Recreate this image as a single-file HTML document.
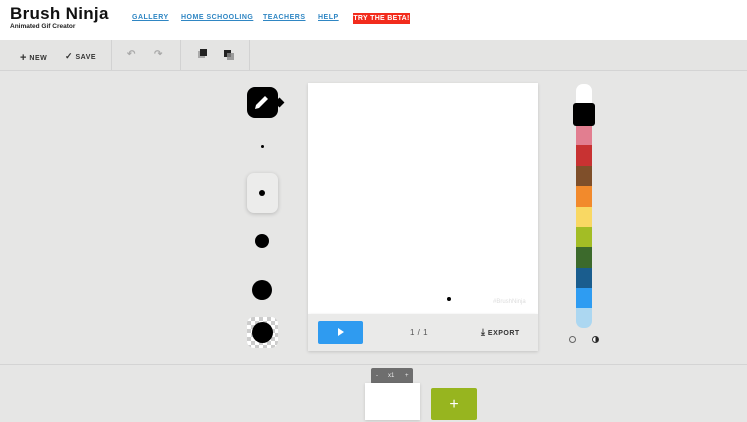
<!DOCTYPE html>
<html><head><meta charset="utf-8"><style>
*{margin:0;padding:0;box-sizing:border-box}
body{width:747px;height:420px;overflow:hidden;background:#e6e6e5;font-family:"Liberation Sans",sans-serif;position:relative}
.hdr{position:absolute;left:0;top:0;width:747px;height:40px;background:#fff}
.logo{position:absolute;left:10px;top:4px;font-size:17px;font-weight:bold;color:#111;letter-spacing:0.3px}
.sub{position:absolute;left:10px;top:23px;font-size:6.5px;font-weight:bold;color:#222}
.nav{position:absolute;top:14px;font-size:7px;font-weight:bold;color:#2f86c3;text-decoration:underline;letter-spacing:0.5px;white-space:nowrap}
.beta{position:absolute;left:353px;top:13px;width:57px;height:11px;background:#f22b1c;color:#fff;font-size:7px;font-weight:bold;text-align:center;line-height:11px;letter-spacing:0.3px;white-space:nowrap}
.tb{position:absolute;left:0;top:40px;width:747px;height:31px;background:#e4e4e3;border-bottom:1px solid #d4d4d4}
.sep{position:absolute;top:40px;width:1px;height:30px;background:#d2d2d2}
.tbt{position:absolute;top:51px;font-size:7px;font-weight:bold;color:#333;letter-spacing:0.5px;white-space:nowrap}
.canvas{position:absolute;left:308px;top:83px;width:230px;height:231px;background:#fff;box-shadow:0 1px 3px rgba(0,0,0,.15)}
.cbar{position:absolute;left:308px;top:314px;width:230px;height:37px;background:#eaeae9;box-shadow:0 1px 3px rgba(0,0,0,.15)}
.dot{position:absolute;background:#000;border-radius:50%}
.sw{position:absolute;left:576px;width:16px}
.bottom{position:absolute;left:0;top:364px;width:747px;height:56px;border-top:1px solid #d4d4d4}
</style></head><body>
<div class="hdr">
<div class="logo">Brush Ninja</div>
<div class="sub">Animated Gif Creator</div>
<div class="nav" style="left:132px">GALLERY</div>
<div class="nav" style="left:181px">HOME SCHOOLING</div>
<div class="nav" style="left:263px">TEACHERS</div>
<div class="nav" style="left:318px">HELP</div>
<div class="beta">TRY THE BETA!</div>
</div>
<div class="tb"></div>
<div class="sep" style="left:111px"></div>
<div class="sep" style="left:180px"></div>
<div class="sep" style="left:249px"></div>
<div class="tbt" style="left:20px"><span style="font-size:11px;position:relative;top:1px">+</span> NEW</div>
<div class="tbt" style="left:65px"><span style="font-size:9px">✓</span> SAVE</div>
<div class="tbt" style="left:127px;color:#aaa;font-size:10px;top:49px">↶</div>
<div class="tbt" style="left:154px;color:#aaa;font-size:10px;top:49px">↷</div>
<div style="position:absolute;left:198px;top:51px;width:7px;height:7px;background:#aaa"></div><div style="position:absolute;left:200px;top:49px;width:7px;height:7px;background:#222"></div>
<div style="position:absolute;left:224px;top:50px;width:7px;height:7px;background:#222"></div><div style="position:absolute;left:227px;top:53px;width:7px;height:7px;background:#888;opacity:.8"></div>

<div style="position:absolute;left:247px;top:87px;width:31px;height:31px;background:#000;border-radius:8px"></div>
<div style="position:absolute;left:276px;top:99px;width:7px;height:7px;background:#000;transform:rotate(45deg)"></div>
<svg style="position:absolute;left:252px;top:92px" width="20" height="20" viewBox="0 0 20 20"><path d="M3 17 L4 13 L13 4 L16 7 L7 16 Z" fill="#fff"/></svg>
<div class="dot" style="left:261px;top:145px;width:3px;height:3px"></div>
<div style="position:absolute;left:247px;top:173px;width:31px;height:40px;background:#ececeb;border-radius:7px;box-shadow:0 1px 4px rgba(0,0,0,.2)"></div>
<div class="dot" style="left:259px;top:190px;width:6px;height:6px"></div>
<div class="dot" style="left:255px;top:234px;width:14px;height:14px"></div>
<div class="dot" style="left:252px;top:280px;width:20px;height:20px"></div>
<div style="position:absolute;left:247px;top:317px;width:31px;height:31px;border-radius:7px;background:repeating-conic-gradient(#ccc 0 25%,#fff 0 50%) 0 0/8px 8px"></div>
<div class="dot" style="left:252px;top:322px;width:21px;height:21px"></div>

<div class="canvas"></div>
<div class="dot" style="left:447px;top:297px;width:4px;height:4px"></div>
<div style="position:absolute;left:493px;top:299px;font-size:6px;color:#ddd">#BrushNinja</div>
<div class="cbar"></div>
<div style="position:absolute;left:318px;top:321px;width:45px;height:23px;background:#2f9bf0;border-radius:2px"></div>
<div style="position:absolute;left:338px;top:328px;border-left:6px solid #fff;border-top:4px solid transparent;border-bottom:4px solid transparent"></div>
<div style="position:absolute;left:410px;top:328px;font-size:8px;color:#555;letter-spacing:0.5px">1 / 1</div>
<div style="position:absolute;left:481px;top:327px;font-size:7px;font-weight:bold;color:#333;letter-spacing:0.5px;white-space:nowrap"><span style="font-size:9px">⤓</span> EXPORT</div>

<div class="sw" style="top:84px;height:22px;background:#fff;border-radius:7px 7px 0 0"></div>
<div class="sw" style="top:125px;height:21px;background:#e27e90"></div>
<div class="sw" style="top:145px;height:21px;background:#c83232"></div>
<div class="sw" style="top:166px;height:21px;background:#7f4f2a"></div>
<div class="sw" style="top:186px;height:21px;background:#f28a2c"></div>
<div class="sw" style="top:207px;height:21px;background:#f9d863"></div>
<div class="sw" style="top:227px;height:21px;background:#a3bd25"></div>
<div class="sw" style="top:247px;height:21px;background:#3c6a2c"></div>
<div class="sw" style="top:268px;height:21px;background:#1a5d8e"></div>
<div class="sw" style="top:288px;height:21px;background:#2e9cf2"></div>
<div class="sw" style="top:308px;height:20px;background:#acd7f1;border-radius:0 0 7px 7px"></div>
<div style="position:absolute;left:573px;top:103px;width:22px;height:23px;background:#000;border-radius:3px"></div>
<div style="position:absolute;left:569px;top:336px;width:7px;height:7px;border:1px solid #666;border-radius:50%"></div>
<div style="position:absolute;left:592px;top:336px;width:7px;height:7px;border:1px solid #333;border-radius:50%;background:linear-gradient(90deg,#fff 50%,#222 50%)"></div>

<div class="bottom"></div>
<div style="position:absolute;left:371px;top:368px;width:42px;height:16px;background:#6e6e6e;border-radius:2px;color:#eee;font-size:6px;line-height:16px"><span style="position:absolute;left:5px">-</span><span style="position:absolute;left:17px">x1</span><span style="position:absolute;left:34px">+</span></div>
<div style="position:absolute;left:365px;top:383px;width:55px;height:37px;background:#fff;box-shadow:0 1px 3px rgba(0,0,0,.15)"></div>
<div style="position:absolute;left:431px;top:388px;width:46px;height:32px;background:#97b51f;border-radius:2px;color:#fff;text-align:center;font-size:16px;line-height:34px">+</div>
</body></html>
